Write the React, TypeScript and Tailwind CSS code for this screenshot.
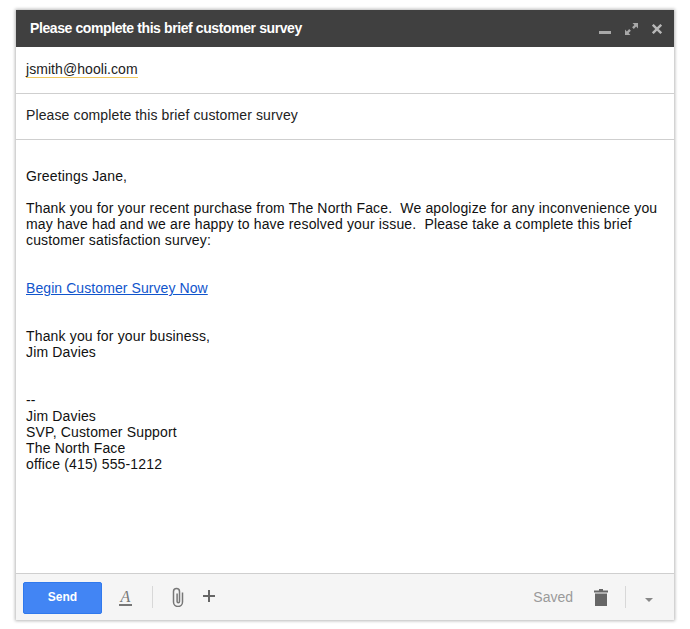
export default function App() {
  return (
    <div className="h-[629px] w-[690px] bg-white pt-[10px] pl-[16px] font-['Liberation_Sans',Arial,sans-serif] text-[14px] text-[#222]">
      <div className="flex h-[610px] w-[658px] flex-col bg-white shadow-[0_0_3px_1px_rgba(0,0,0,0.28)]">
        <div className="flex h-[37px] shrink-0 items-center justify-between bg-[#404040] pl-[14px] pr-[12px]">
          <span className="text-[14px] font-bold tracking-[-0.4px] text-white">Please complete this brief customer survey</span>
          <div className="flex items-center">
            <svg width="12" height="12" viewBox="0 0 12 12" className="mr-[14px] mt-[1px]">
              <rect x="0" y="8" width="12" height="3" fill="#a8a8a8" />
            </svg>
            <svg width="13" height="12" viewBox="0 0 13 12" className="mr-[14px] mt-[1px]" fill="#a8a8a8">
              <path d="M7.500 0H13v5.500l-1.900-1.900-2.300 2.300-1.700-1.700 2.300-2.300z" />
              <path d="M5.500 12H0V6.500l1.900 1.900 2.300-2.300 1.700 1.700-2.300 2.300z" />
            </svg>
            <svg width="10" height="10" viewBox="0 0 10 10" stroke="#b8b8b8" strokeWidth="2.400">
              <path d="M0.800 0.800l8.400 8.400M9.200 0.800l-8.400 8.400" />
            </svg>
          </div>
        </div>
        <div className="flex h-[47px] shrink-0 items-center border-b border-[#cfcfcf] pl-[10px]">
          <span className="border-b border-[#f0c860] leading-[15px] tracking-[0.06px]">jsmith@hooli.com</span>
        </div>
        <div className="flex h-[46px] shrink-0 items-center border-b border-[#cfcfcf] pb-[2px] pl-[10px]">
          <span className="tracking-[0.12px]">Please complete this brief customer survey</span>
        </div>
        <div className="flex-1 whitespace-pre pl-[10px] pt-[28px] leading-[16px] tracking-[0.155px] text-[#111]">
          <div>Greetings Jane,</div>
          <div className="mt-[16px]">Thank you for your recent purchase from The North Face.  We apologize for any inconvenience you</div>
          <div>may have had and we are happy to have resolved your issue.  Please take a complete this brief</div>
          <div>customer satisfaction survey:</div>
          <div className="mt-[32px]"><a className="tracking-[0.08px] text-[#1155cc] underline">Begin Customer Survey Now</a></div>
          <div className="mt-[32px]">Thank you for your business,</div>
          <div>Jim Davies</div>
          <div className="mt-[32px]">--</div>
          <div>Jim Davies</div>
          <div>SVP, Customer Support</div>
          <div>The North Face</div>
          <div>office (415) 555-1212</div>
        </div>
        <div className="flex h-[47px] shrink-0 items-center border-t border-[#cfcfcf] bg-[#f5f5f5] pl-[7px]">
          <div className="mt-[2px] flex h-[32px] w-[79px] items-center justify-center rounded-[2px] border border-[#3079ed] bg-[#4285f4] pb-[2px] text-[12px] font-bold text-white">Send</div>
          <span className="ml-[17px] mt-[1px] w-[13px] border-b-2 border-[#777] text-center font-['Liberation_Serif',serif] text-[16px] italic leading-[14px] text-[#777]">A</span>
          <div className="ml-[20px] h-[22px] w-px bg-[#d8d8d8]" />
          <svg width="14" height="20" viewBox="0 0 14 20" fill="none" stroke="#777" strokeWidth="1.500" className="ml-[18px]">
            <path d="M11.500 5v9.500a4.500 4.500 0 0 1-9 0V4a3 3 0 0 1 6 0v10a1.200 1.200 0 0 1-2.400 0V6" transform="translate(0 0.500)" />
          </svg>
          <svg width="12" height="12" viewBox="0 0 12 12" fill="#666" className="ml-[18px] mb-[2px]">
            <path d="M5 0h2v5h5v2H7v5H5V7H0V5h5z" />
          </svg>
          <span className="ml-auto text-[14px] text-[#9a9a9a]">Saved</span>
          <svg width="14" height="17" viewBox="0 0 14 17" fill="#666" className="ml-[21px]">
            <path d="M5 0h4v1.500h5V3.500H0V1.500h5z" />
            <path d="M1 4.500h12V17H1z" />
          </svg>
          <div className="ml-[17px] h-[22px] w-px bg-[#d8d8d8]" />
          <svg width="8" height="4" viewBox="0 0 8 4" fill="#888" className="ml-[19px] mr-[21px] mt-[5px]">
            <path d="M0 0h8L4 4z" />
          </svg>
        </div>
      </div>
    </div>
  );
}
